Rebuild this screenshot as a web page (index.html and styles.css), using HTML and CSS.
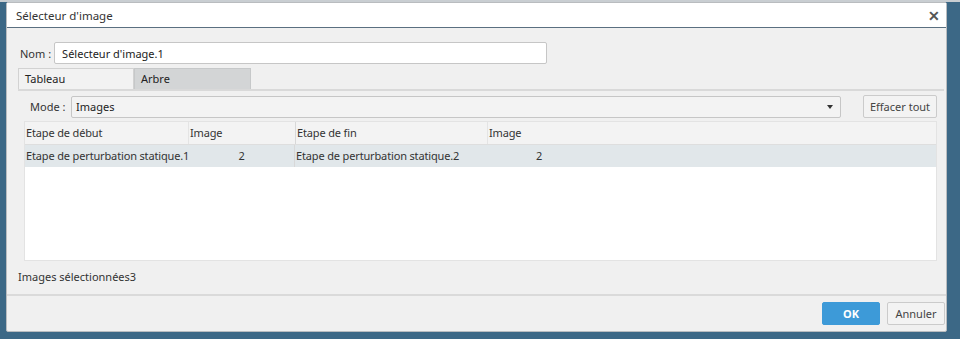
FILE: index.html
```html
<!DOCTYPE html>
<html lang="fr">
<head>
    <meta charset="UTF-8">
    <title>Sélecteur d'image</title>
    <link rel="stylesheet" href="styles.css">
</head>
<body>
    <div class="desktop">
        <div class="dialog">
            <div class="title-bar">
                <span class="title">Sélecteur d'image</span>
                <span class="close">&#x2715;</span>
            </div>
            <div class="content">
                <div class="name-row">
                    <label>Nom :</label>
                    <input type="text" class="name-input" value="Sélecteur d'image.1">
                </div>
                <div class="tabs">
                    <div class="tab active">Tableau</div>
                    <div class="tab">Arbre</div>
                </div>
                <div class="panel">
                    <div class="mode-row">
                        <label>Mode :</label>
                        <div class="select">
                            <span>Images</span>
                            <span class="arrow"></span>
                        </div>
                        <button class="btn clear">Effacer tout</button>
                    </div>
                    <div class="table">
                        <div class="row head">
                            <div class="cell c1">Etape de début</div>
                            <div class="cell c2">Image</div>
                            <div class="cell c3">Etape de fin</div>
                            <div class="cell c4">Image</div>
                            <div class="cell c5"></div>
                        </div>
                        <div class="row selected">
                            <div class="cell c1">Etape de perturbation statique.1</div>
                            <div class="cell c2 num">2</div>
                            <div class="cell c3">Etape de perturbation statique.2</div>
                            <div class="cell c4 num">2</div>
                            <div class="cell c5"></div>
                        </div>
                    </div>
                </div>
                <div class="status">Images sélectionnées3</div>
            </div>
            <div class="footer">
                <button class="btn ok">OK</button>
                <button class="btn">Annuler</button>
            </div>
        </div>
    </div>
</body>
</html>
```

FILE: styles.css
```css
body {
    margin: 0;
    padding: 0;
    font-family: "Noto Sans", "Open Sans", sans-serif;
    font-size: 11px;
    color: #333;
    background-color: #3c6886;
}
.desktop {
    height: 339px;
    padding: 2px 13px 0 6px;
    box-sizing: border-box;
    background: linear-gradient(#c9ced2 0, #c9ced2 2px, #3c6886 2px);
}
.dialog {
    height: 330px;
    background: #f0f0f0;
    border: 1px solid #b9bcbf;
    border-radius: 2px;
    display: flex;
    flex-direction: column;
    box-sizing: border-box;
}
.title-bar {
    height: 24px;
    background: white;
    border-bottom: 1px solid #5a6f80;
    display: flex;
    align-items: center;
    justify-content: space-between;
    padding: 0 6px 0 9px;
    flex-shrink: 0;
}
.title {
    font-size: 11.5px;
    color: #333;
}
.close {
    font-size: 14px;
    color: #555;
    font-weight: bold;
}
.content {
    flex: 1;
    padding: 14px 2px 0 11px;
}
.name-row {
    display: flex;
    align-items: center;
    gap: 3px;
    margin-left: 2px;
}
.name-input {
    width: 493px;
    height: 22px;
    box-sizing: border-box;
    border: 1px solid #c6c6c6;
    border-radius: 2px;
    padding: 0 7px;
    font-family: inherit;
    font-size: 11px;
    color: #222;
    background: white;
    margin: 0;
}
.tabs {
    display: flex;
    margin-top: 4px;
    border-bottom: 2px solid #d9d9d9;
}
.tab {
    width: 108px;
    height: 20px;
    line-height: 20px;
    padding-left: 6px;
    border: 1px solid #d2d2d2;
    border-bottom: none;
    background: #f2f2f2;
    color: #222;
}
.tab + .tab {
    width: 109px;
    background: #d3d5d6;
    border-color: #c6c8c9;
}
.panel {
    padding: 4px 7px 0 6px;
}
.mode-row {
    display: flex;
    align-items: center;
    margin-left: 6px;
}
.mode-row label {
    width: 41px;
}
.select {
    width: 770px;
    height: 22px;
    box-sizing: border-box;
    border: 1px solid #c6c6c6;
    border-radius: 2px;
    display: flex;
    align-items: center;
    justify-content: space-between;
    padding: 0 7px 0 4px;
    background: #f3f3f3;
    color: #222;
}
.arrow {
    width: 0;
    height: 0;
    border-left: 3px solid transparent;
    border-right: 3px solid transparent;
    border-top: 4px solid #333;
}
.btn {
    height: 23px;
    border: 1px solid #cbcbcb;
    border-radius: 2px;
    background: #f3f3f3;
    font-family: inherit;
    font-size: 11px;
    color: #444;
    padding: 0 4px;
    white-space: nowrap;
}
.clear {
    margin-left: auto;
    width: 74px;
}
.table {
    margin-top: 3px;
    height: 140px;
    background: white;
    border: 1px solid #e3e3e3;
    box-sizing: border-box;
}
.row {
    display: flex;
    height: 22px;
}
.row.head {
    background: #f3f3f3;
    border-bottom: 1px solid #dedede;
}
.row.selected {
    background: #e1e7ea;
}
.cell {
    line-height: 22px;
    padding-left: 1px;
    white-space: nowrap;
    color: #333;
    letter-spacing: -0.15px;
}
.c1 {
    width: 162px;
}
.c2 {
    width: 105px;
}
.c3 {
    width: 190px;
    border-left: 1px solid #d8d8d8;
}
.c4 {
    width: 104px;
}
.head .c2, .head .c4 {
    border-left: 1px solid #e4e4e4;
}
.head .c5 {
    flex: 1;
}
.num {
    text-align: center;
}
.status {
    margin-top: 8px;
    color: #333;
}
.footer {
    height: 35px;
    border-top: 2px solid #dadada;
    display: flex;
    justify-content: flex-end;
    align-items: center;
    gap: 7px;
    padding-right: 1px;
    flex-shrink: 0;
}
.btn.ok {
    width: 58px;
    background: #3d9ad8;
    border-color: #3d9ad8;
    color: white;
    font-weight: bold;
}
.footer .btn {
    width: 58px;
}
```
